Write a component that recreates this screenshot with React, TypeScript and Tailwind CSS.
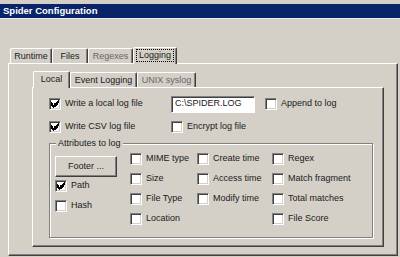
import React from "react";

const Check = ({ checked = false }: { checked?: boolean }) => (
  <span className="w-[12px] h-[12px] shrink-0 bg-white border border-t-[#808080] border-l-[#808080] border-r-white border-b-white shadow-[inset_1px_1px_0_#404040,inset_-1px_-1px_0_#d4d0c8] flex items-center justify-center">
    {checked && (
      <svg width="8" height="8" viewBox="0 0 7 7" shapeRendering="crispEdges">
        <path
          fill="#000"
          d="M6 0h1v1h-1zM5 1h2v1h-2zM0 2h1v1h-1zM4 2h3v1h-3zM0 3h2v1h-2zM3 3h3v1h-3zM0 4h5v1h-5zM1 5h3v1h-3zM2 6h1v1h-1z"
        />
      </svg>
    )}
  </span>
);

const CB = ({
  label,
  checked = false,
  className = "",
}: {
  label: string;
  checked?: boolean;
  className?: string;
}) => (
  <div className={`flex items-center ${className}`}>
    <Check checked={checked} />
    <span className="ml-[4px] whitespace-nowrap">{label}</span>
  </div>
);

const Tab = ({
  label,
  w,
  selected = false,
  focus = false,
  gray = false,
}: {
  label: string;
  w: string;
  selected?: boolean;
  focus?: boolean;
  gray?: boolean;
}) => (
  <div
    className={`${w} ${
      selected ? "h-[17px] mb-[-1px] relative z-10 pb-[2px]" : "h-[15px]"
    } bg-[#d4d0c8] border-t border-l border-white border-r border-r-[#404040] shadow-[inset_-1px_0_0_#808080] rounded-tl-[2px] rounded-tr-[2px] flex items-center justify-center ${
      gray ? "text-[#666]" : "text-[#1a1a1a]"
    }`}
  >
    {focus ? (
      <span className="border border-dotted border-black px-[2px] leading-[11px]">{label}</span>
    ) : (
      <span className="leading-[11px]">{label}</span>
    )}
  </div>
);

export default function App() {
  return (
    <div
      className="w-[400px] h-[257px] bg-[#d4d0c8] overflow-hidden pt-[4px] text-[9px] text-[#1a1a1a]"
      style={{ fontFamily: '"Liberation Sans", Arial, sans-serif' }}
    >
      <div className="h-[14px] bg-[#0a246a] text-white font-bold pl-[3px] flex items-center text-[9.5px]">
        Spider Configuration
      </div>
      <div className="h-[1px] bg-[#ececec]" />

      <div className="ml-[8px] w-[390px] mt-[28px]">
        <div className="flex items-end pl-[2px] h-[16px]">
          <Tab label="Runtime" w="w-[42px]" />
          <Tab label="Files" w="w-[36px]" />
          <Tab label="Regexes" w="w-[45px]" gray />
          <Tab label="Logging" w="w-[44px]" selected focus />
        </div>

        <div className="h-[193px] border-l border-t border-white border-r border-b border-r-[#404040] border-b-[#404040] shadow-[inset_-1px_-1px_0_#808080] pt-[7px]">
          <div className="ml-[23px] w-[352px]">
            <div className="flex items-end pl-[1px] h-[16px]">
              <Tab label="Local" w="w-[37px]" selected />
              <Tab label="Event Logging" w="w-[67px]" />
              <Tab label="UNIX syslog" w="w-[59px]" gray />
            </div>

            <div className="h-[160px] border-l border-t border-white border-r border-b border-r-[#404040] border-b-[#404040] shadow-[inset_-1px_-1px_0_#808080] pt-[7px]">
              <div className="flex items-center h-[18px] pl-[16px]">
                <CB label="Write a local log file" checked className="w-[122px]" />
                <div className="w-[84px] h-[17px] bg-white border border-t-[#808080] border-l-[#808080] border-r-white border-b-white shadow-[inset_1px_1px_0_#404040] flex items-center pl-[3px]">
                  C:\SPIDER.LOG
                </div>
                <CB label="Append to log" className="ml-[10px]" />
              </div>

              <div className="flex items-center h-[14px] pl-[16px] mt-[7px]">
                <CB label="Write CSV log file" checked className="w-[122px]" />
                <CB label="Encrypt log file" />
              </div>

              <fieldset className="ml-[16px] w-[324px] h-[100px] mt-[4px] border border-[#808080] shadow-[1px_1px_0_#fff,inset_1px_1px_0_#fff]">
                <legend className="ml-[6px] px-[2px] leading-[11px] bg-[#d4d0c8]">Attributes to log</legend>
                <div className="flex items-start">
                  <div className="w-[80px] pl-[5px] pt-[7px] flex flex-col">
                    <div className="w-[62px] h-[21px] border border-t-white border-l-white border-r-[#404040] border-b-[#404040] shadow-[inset_-1px_-1px_0_#808080] flex items-center justify-center">
                      Footer ...
                    </div>
                    <CB label="Path" checked className="h-[20px] -mt-[1px]" />
                    <CB label="Hash" className="h-[20px]" />
                  </div>
                  <div className="w-[67px] flex flex-col">
                    <CB label="MIME type" className="h-[20px]" />
                    <CB label="Size" className="h-[20px]" />
                    <CB label="File Type" className="h-[20px]" />
                    <CB label="Location" className="h-[20px]" />
                  </div>
                  <div className="w-[75px] flex flex-col">
                    <CB label="Create time" className="h-[20px]" />
                    <CB label="Access time" className="h-[20px]" />
                    <CB label="Modify time" className="h-[20px]" />
                  </div>
                  <div className="flex flex-col">
                    <CB label="Regex" className="h-[20px]" />
                    <CB label="Match fragment" className="h-[20px]" />
                    <CB label="Total matches" className="h-[20px]" />
                    <CB label="File Score" className="h-[20px]" />
                  </div>
                </div>
              </fieldset>
            </div>
          </div>
        </div>
      </div>
    </div>
  );
}
